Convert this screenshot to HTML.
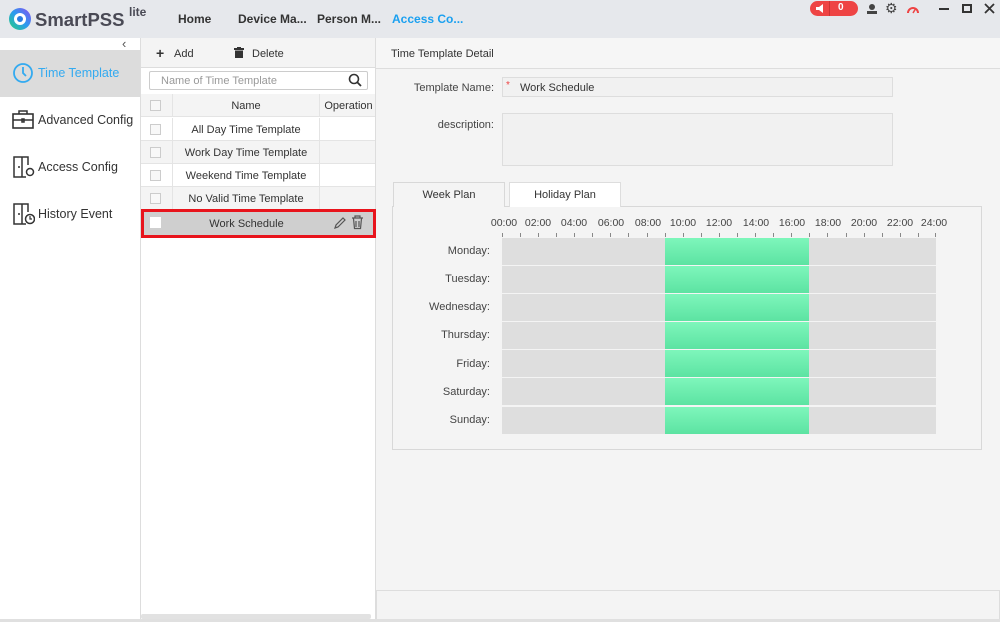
<!DOCTYPE html>
<html><head><meta charset="utf-8"><style>
*{box-sizing:border-box;margin:0;padding:0}
body{width:1000px;height:622px;position:relative;overflow:hidden;font-family:"Liberation Sans",sans-serif;font-size:11px;color:#333;background:#fff}
.a{position:absolute}
.top{left:0;top:0;width:1000px;height:38px;background:#e6e8ec}
.nav{top:12px;font-size:12px;font-weight:bold;color:#333}
.side{left:0;top:38px;width:141px;height:584px;background:#fff;border-right:1px solid #ddd}
.si{left:0;width:140px;height:47px;font-size:12.5px;color:#333}
.si span{position:absolute;left:38px;top:16px}
.list{left:141px;top:38px;width:235px;height:584px;background:#fff;border-right:1px solid #ddd}
.row{left:141px;width:234px;height:23px;border-bottom:1px solid #e4e4e4;font-size:11px}
.cb{position:absolute;left:9px;top:6px;width:11px;height:11px;border:1px solid #ccc;background:#f8f8f8}
.nm{position:absolute;left:31px;width:148px;top:0;height:23px;line-height:25px;text-align:center;border-left:1px solid #e4e4e4;border-right:1px solid #e4e4e4}
.right{left:376px;top:38px;width:624px;height:584px;background:#f4f4f4}
.lbl{font-size:11px;color:#444;text-align:right}
.day{left:392px;width:98px;text-align:right;font-size:11px;color:#444}
.bar{left:502px;width:434px;height:27px;background:#dedede}
.g{position:absolute;left:163px;width:144px;top:0;height:27px;background:linear-gradient(#7ef6bb,#5ce3a2)}
.tl{top:217px;font-size:10.5px;color:#444;width:30px;text-align:center}
.tk{top:233px;width:1px;height:4px;background:#888}
</style></head><body>
<div class="a top"></div>
<svg class="a" style="left:8px;top:7px" width="24" height="24" viewBox="0 0 24 24"><defs><linearGradient id="lg" x1="0" y1="1" x2="1" y2="0"><stop offset="0" stop-color="#27d07a"/><stop offset=".5" stop-color="#2a9bf0"/><stop offset="1" stop-color="#8a4df0"/></linearGradient></defs><circle cx="12" cy="12" r="11" fill="url(#lg)"/><circle cx="12" cy="12" r="6" fill="#fff"/><circle cx="12" cy="12" r="3" fill="#2a7de0"/></svg>
<div class="a" style="left:35px;top:9px;font-size:18.5px;font-weight:bold;color:#4a4a55">SmartPSS</div>
<div class="a" style="left:129px;top:5px;font-size:12px;font-weight:bold;color:#4a4a55">lite</div>
<div class="a nav" style="left:178px">Home</div>
<div class="a nav" style="left:238px">Device Ma...</div>
<div class="a nav" style="left:317px">Person M...</div>
<div class="a nav" style="left:392px;color:#1aa0f0">Access Co...</div>
<div class="a" style="left:810px;top:1px;width:48px;height:15px;border-radius:8px;background:#ee4444"></div>
<svg class="a" style="left:815px;top:3px" width="12" height="11"><path d="M1 4h3l4-3v9l-4-3H1z" fill="#fff"/></svg>
<div class="a" style="left:829px;top:1px;width:1px;height:15px;background:#c33"></div>
<div class="a" style="left:838px;top:2px;color:#fff;font-weight:bold;font-size:10px">0</div>
<svg class="a" style="left:866px;top:3px" width="12" height="12"><circle cx="6" cy="4" r="3" fill="#444"/><rect x="1" y="8" width="10" height="3" fill="#444"/></svg>
<div class="a" style="left:885px;top:0px;font-size:14px;color:#444">⚙</div>
<svg class="a" style="left:906px;top:3px" width="14" height="11"><path d="M2 10A5 5 0 0 1 12 10" stroke="#e44" stroke-width="2" fill="none"/><path d="M7 10L10 5" stroke="#e44" stroke-width="1.5"/></svg>
<div class="a" style="left:939px;top:8px;width:10px;height:2px;background:#333"></div>
<div class="a" style="left:962px;top:4px;width:10px;height:9px;border:2px solid #333"></div>
<svg class="a" style="left:984px;top:3px" width="11" height="11"><path d="M1 1l9 9M10 1l-9 9" stroke="#333" stroke-width="1.8"/></svg>

<div class="a side"></div>
<div class="a" style="left:122px;top:36px;font-size:13px;color:#555">‹</div>
<div class="a si" style="top:50px;background:#dcdcdc;color:#33aaf0"><svg class="a" style="left:12px;top:12px" width="22" height="22"><circle cx="11" cy="11" r="9" stroke="#33aaf0" stroke-width="1.8" fill="none"/><path d="M11 5v6l3 3" stroke="#33aaf0" stroke-width="1.8" fill="none"/></svg><span>Time Template</span></div>
<div class="a si" style="top:97px"><svg class="a" style="left:12px;top:13px" width="22" height="20"><rect x="1" y="4" width="20" height="14" stroke="#333" stroke-width="1.6" fill="none"/><path d="M7 4V1h8v3M1 10h20M10 9h2v3h-2z" stroke="#333" stroke-width="1.5" fill="none"/></svg><span>Advanced Config</span></div>
<div class="a si" style="top:144px"><svg class="a" style="left:13px;top:11px" width="22" height="24"><path d="M1 2h8v20H1zM9 2h6v8M9 22h4" stroke="#333" stroke-width="1.5" fill="none"/><circle cx="17" cy="17" r="3.5" stroke="#333" stroke-width="1.5" fill="none"/><circle cx="6" cy="12" r="1" fill="#333"/></svg><span>Access Config</span></div>
<div class="a si" style="top:191px"><svg class="a" style="left:13px;top:11px" width="22" height="24"><path d="M1 2h8v20H1zM9 2h6v8M9 22h4" stroke="#333" stroke-width="1.5" fill="none"/><circle cx="17" cy="17" r="4.5" stroke="#333" stroke-width="1.5" fill="none"/><path d="M17 14v3h2" stroke="#333" stroke-width="1.2" fill="none"/><circle cx="6" cy="12" r="1" fill="#333"/></svg><span>History Event</span></div>

<div class="a list"></div>
<div class="a" style="left:141px;top:38px;width:234px;height:30px;background:#f4f4f4;border-bottom:1px solid #ddd"></div>
<div class="a" style="left:156px;top:45px;font-size:14px;font-weight:bold;color:#333">+</div>
<div class="a" style="left:174px;top:48px">Add</div>
<svg class="a" style="left:234px;top:47px" width="10" height="11"><rect x="0" y="1" width="10" height="2" fill="#333"/><rect x="3" y="0" width="4" height="2" fill="#333"/><rect x="1" y="3.5" width="8" height="7.5" fill="#333"/></svg>
<div class="a" style="left:252px;top:48px">Delete</div>
<div class="a" style="left:149px;top:71px;width:219px;height:19px;border:1px solid #ccc;background:#fff;border-radius:2px"></div>
<div class="a" style="left:161px;top:75px;color:#999">Name of Time Template</div>
<svg class="a" style="left:348px;top:73px" width="14" height="14"><circle cx="6" cy="6" r="4.5" stroke="#333" stroke-width="1.6" fill="none"/><path d="M9.5 9.5l3.5 3.5" stroke="#333" stroke-width="1.8"/></svg>
<div class="a row" style="top:94px;background:#f4f4f4"><div class="cb"></div><div class="nm">Name</div><div style="position:absolute;left:181px;top:0;line-height:25px;width:53px;text-align:center">Operation</div></div>
<div class="a row" style="top:118px"><div class="cb"></div><div class="nm">All Day Time Template</div></div>
<div class="a row" style="top:141px;background:#f4f4f4"><div class="cb"></div><div class="nm">Work Day Time Template</div></div>
<div class="a row" style="top:164px"><div class="cb"></div><div class="nm">Weekend Time Template</div></div>
<div class="a row" style="top:187px;background:#f4f4f4"><div class="cb"></div><div class="nm">No Valid Time Template</div></div>
<div class="a" style="left:141px;top:209px;width:235px;height:29px;background:#cfcfcf;border:3px solid #e8141c"></div>
<div class="a" style="left:150px;top:217px;width:11px;height:11px;background:#fff"></div>
<div class="a" style="left:141px;top:218px;width:211px;text-align:center;font-size:11px">Work Schedule</div>
<svg class="a" style="left:333px;top:216px" width="14" height="14"><path d="M2 12l1-3 7-7 2 2-7 7z" stroke="#555" stroke-width="1.2" fill="none"/></svg>
<svg class="a" style="left:351px;top:215px" width="13" height="15"><path d="M1 3h11M4 3V1h5v2M2.5 3.5l1 10h6l1-10M5 6v6M8 6v6" stroke="#555" stroke-width="1.2" fill="none"/></svg>
<div class="a" style="left:141px;top:614px;width:230px;height:5px;background:#e2e2e2;border-radius:2px"></div>

<div class="a right"></div>
<div class="a" style="left:376px;top:38px;width:624px;height:31px;border-bottom:1px solid #ddd;background:#f6f6f6"></div>
<div class="a" style="left:391px;top:48px;font-size:11px">Time Template Detail</div>
<div class="a lbl" style="left:390px;top:82px;width:104px">Template Name:</div>
<div class="a" style="left:502px;top:77px;width:391px;height:20px;border:1px solid #ddd;background:#f1f1f1"></div>
<div class="a" style="left:506px;top:80px;color:#e44;font-size:10px">*</div>
<div class="a" style="left:520px;top:82px">Work Schedule</div>
<div class="a lbl" style="left:390px;top:119px;width:104px">description:</div>
<div class="a" style="left:502px;top:113px;width:391px;height:53px;border:1px solid #ddd;background:#f1f1f1"></div>
<div class="a" style="left:392px;top:206px;width:590px;height:244px;border:1px solid #d8d8d8"></div>
<div class="a" style="left:393px;top:182px;width:112px;height:25px;border:1px solid #d8d8d8;border-bottom:none;background:#f4f4f4;text-align:center;line-height:24px">Week Plan</div>
<div class="a" style="left:509px;top:182px;width:112px;height:25px;border:1px solid #ddd;border-bottom:none;background:#fff;text-align:center;line-height:24px">Holiday Plan</div>
<div class="a tl" style="left:489px">00:00</div><div class="a tl" style="left:523px">02:00</div><div class="a tl" style="left:559px">04:00</div><div class="a tl" style="left:596px">06:00</div><div class="a tl" style="left:633px">08:00</div><div class="a tl" style="left:668px">10:00</div><div class="a tl" style="left:704px">12:00</div><div class="a tl" style="left:741px">14:00</div><div class="a tl" style="left:777px">16:00</div><div class="a tl" style="left:813px">18:00</div><div class="a tl" style="left:849px">20:00</div><div class="a tl" style="left:885px">22:00</div><div class="a tl" style="left:919px">24:00</div>
<div class="a tk" style="left:502px"></div><div class="a tk" style="left:520px"></div><div class="a tk" style="left:538px"></div><div class="a tk" style="left:556px"></div><div class="a tk" style="left:574px"></div><div class="a tk" style="left:592px"></div><div class="a tk" style="left:610px"></div><div class="a tk" style="left:628px"></div><div class="a tk" style="left:647px"></div><div class="a tk" style="left:665px"></div><div class="a tk" style="left:683px"></div><div class="a tk" style="left:701px"></div><div class="a tk" style="left:719px"></div><div class="a tk" style="left:737px"></div><div class="a tk" style="left:755px"></div><div class="a tk" style="left:773px"></div><div class="a tk" style="left:791px"></div><div class="a tk" style="left:809px"></div><div class="a tk" style="left:827px"></div><div class="a tk" style="left:846px"></div><div class="a tk" style="left:864px"></div><div class="a tk" style="left:882px"></div><div class="a tk" style="left:900px"></div><div class="a tk" style="left:918px"></div><div class="a tk" style="left:935px"></div>
<div class="a day" style="top:245px">Monday:</div><div class="a bar" style="top:238px"><div class="g"></div></div>
<div class="a day" style="top:273px">Tuesday:</div><div class="a bar" style="top:266px"><div class="g"></div></div>
<div class="a day" style="top:301px">Wednesday:</div><div class="a bar" style="top:294px"><div class="g"></div></div>
<div class="a day" style="top:329px">Thursday:</div><div class="a bar" style="top:322px"><div class="g"></div></div>
<div class="a day" style="top:358px">Friday:</div><div class="a bar" style="top:350px"><div class="g"></div></div>
<div class="a day" style="top:386px">Saturday:</div><div class="a bar" style="top:378px"><div class="g"></div></div>
<div class="a day" style="top:414px">Sunday:</div><div class="a bar" style="top:407px"><div class="g"></div></div>
<div class="a" style="left:376px;top:590px;width:624px;height:32px;border:1px solid #ddd;background:#f4f4f4"></div>
<div class="a" style="left:0;top:619px;width:1000px;height:3px;background:#e0e0e0"></div>
</body></html>
